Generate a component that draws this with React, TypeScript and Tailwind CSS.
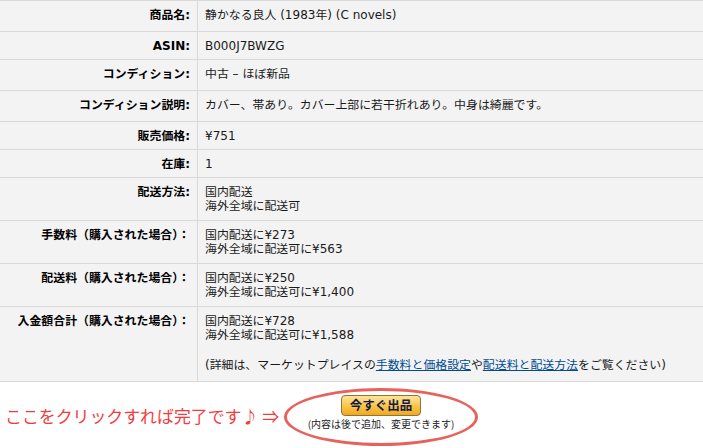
import React from "react"

const CJK = /([\u3000-\u30ff\u3400-\u9fff\uff00-\uffef]+)/

// Japanese runs get their own size so they keep the width of the original page
function Jp({ text }: { text: string }) {
  return (
    <>
      {text.split(CJK).map((part, i) =>
        CJK.test(part) ? (
          <span key={i} className="text-[11.9px]">
            {part}
          </span>
        ) : (
          <span key={i}>{part}</span>
        )
      )}
    </>
  )
}

interface RowProps {
  label: string
  h: string
  children: React.ReactNode
}

function Row({ label, h, children }: RowProps) {
  return (
    <div className={`flex border-b border-[#d9d9d9] ${h}`}>
      <div className="w-[198px] shrink-0 border-r border-[#d9d9d9] pr-[7px] pt-[7px] text-right font-bold text-black">
        <Jp text={label} />
      </div>
      <div className="flex-1 pl-[7px] pt-[7px] text-[#1a1a1a]">{children}</div>
    </div>
  )
}

export default function App() {
  return (
    <div
      className="w-[703px] h-[448px] overflow-hidden bg-white"
      style={{ fontFamily: '"DejaVu Sans", Verdana, "Noto Sans CJK JP", sans-serif' }}
    >
      <div className="bg-[#f3f3f3] border-t border-[#d9d9d9] text-[12px] leading-[14px]">
        <Row label="商品名:" h="h-[31px]">
          <Jp text="静かなる良人 (1983年) (C novels)" />
        </Row>
        <Row label="ASIN:" h="h-[28px]">
          B000J7BWZG
        </Row>
        <Row label="コンディション:" h="h-[31px]">
          <Jp text="中古 – ほぼ新品" />
        </Row>
        <Row label="コンディション説明:" h="h-[31px]">
          <Jp text="カバー、帯あり。カバー上部に若干折れあり。中身は綺麗です。" />
        </Row>
        <Row label="販売価格:" h="h-[28px]">
          ¥751
        </Row>
        <Row label="在庫:" h="h-[28px]">
          1
        </Row>
        <Row label="配送方法:" h="h-[43px]">
          <div><Jp text="国内配送" /></div>
          <div><Jp text="海外全域に配送可" /></div>
        </Row>
        <Row label="手数料（購入された場合）：" h="h-[43px]">
          <div><Jp text="国内配送に¥273" /></div>
          <div><Jp text="海外全域に配送可に¥563" /></div>
        </Row>
        <Row label="配送料（購入された場合）：" h="h-[43px]">
          <div><Jp text="国内配送に¥250" /></div>
          <div><Jp text="海外全域に配送可に¥1,400" /></div>
        </Row>
        <Row label="入金額合計（購入された場合）：" h="h-[75px]">
          <div><Jp text="国内配送に¥728" /></div>
          <div><Jp text="海外全域に配送可に¥1,588" /></div>
          <div className="mt-[16px]">
            <Jp text="(詳細は、マーケットプレイスの" />
            <a href="#" className="text-[#004b91] underline">
              <Jp text="手数料と価格設定" />
            </a>
            <Jp text="や" />
            <a href="#" className="text-[#004b91] underline">
              <Jp text="配送料と配送方法" />
            </a>
            <Jp text="をご覧ください)" />
          </div>
        </Row>
      </div>

      <div className="flex items-center pl-[5px] pt-[6px]">
        <div
          className="mb-[2px] text-[16.9px] leading-[22px] text-[#f23c3c]"
          style={{ fontFamily: '"Noto Sans CJK JP", sans-serif' }}
        >
          ここをクリックすれば完了です♪ ⇒
        </div>
        <div className="ml-[5px] flex h-[58px] w-[194px] flex-col items-center rounded-[50%] border-[3px] border-[#e8625d] pt-[4px]">
          <button
            className="flex h-[21px] w-[80px] items-center justify-center rounded-[4px] border border-[#8f7433] bg-linear-to-b from-[#fde49a] via-[#f9c74a] to-[#f0a81c] text-[12.5px] font-bold text-[#131a48]"
            style={{ fontFamily: '"Noto Sans CJK JP", sans-serif' }}
          >
            今すぐ出品
          </button>
          <div
            className="mt-[2px] text-[10px] leading-[12px] text-[#222]"
            style={{ fontFamily: '"Noto Sans CJK JP", sans-serif' }}
          >
            (内容は後で追加、変更できます)
          </div>
        </div>
      </div>
    </div>
  )
}
